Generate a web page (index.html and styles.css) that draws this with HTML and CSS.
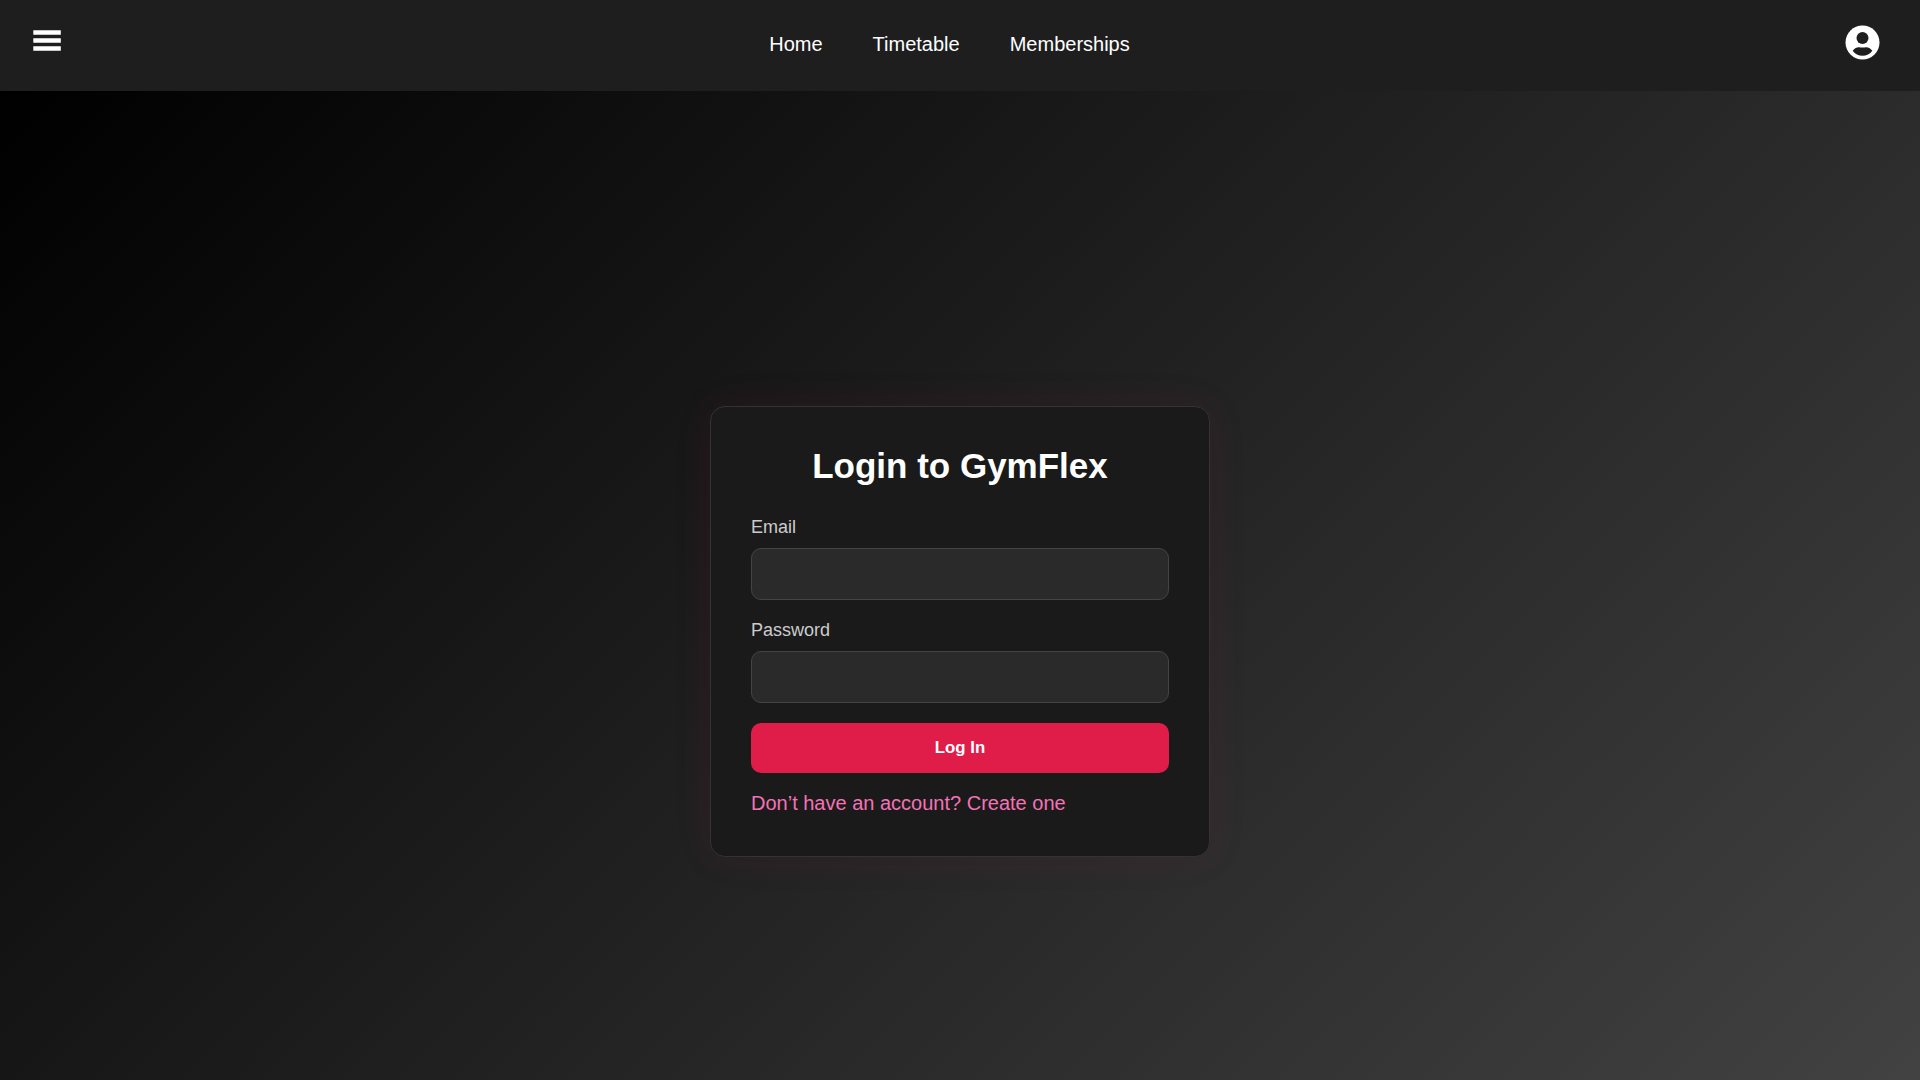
FILE: index.html
```html
<!DOCTYPE html>
<html lang="en">
<head>
<meta charset="utf-8">
<title>GymFlex</title>
<link rel="stylesheet" href="styles.css">
</head>
<body>
<header class="navbar">
  <button class="menu-btn" aria-label="Menu">
    <svg width="28" height="22" viewBox="0 0 28 22" fill="#fff"><path d="M.3 .3h27.500v4.400H.3zM.3 8.300h27.500v4.400H.3zM.3 16.300h27.500v4.400H.3z"/></svg>
  </button>
  <nav class="nav-links">
    <a href="#">Home</a>
    <a href="#">Timetable</a>
    <a href="#">Memberships</a>
  </nav>
  <a class="profile" href="#" aria-label="Account">
    <svg width="35" height="35" viewBox="0 0 35 35"><circle cx="17.500" cy="17.500" r="17" fill="#fff"/><circle cx="17.500" cy="13" r="6" fill="#1e1e1e"/><path d="M7.700 25.700C9.500 23.300 11.800 22.200 13.700 22.200C15 22.200 15.700 22.600 17.500 22.600S20 22.200 21.300 22.200C23.200 22.200 25.500 23.300 27.300 25.700C25 29 21.500 30.800 17.500 30.800S10 29 7.700 25.700Z" fill="#1e1e1e"/></svg>
  </a>
</header>
<main class="page">
  <form class="card">
    <h1>Login to GymFlex</h1>
    <label for="email">Email</label>
    <input id="email" type="email">
    <label for="password">Password</label>
    <input id="password" type="password">
    <button class="submit" type="button">Log In</button>
    <a class="signup" href="#">Don’t have an account? Create one</a>
  </form>
</main>
</body>
</html>
```
FILE: styles.css
```css
* { box-sizing: border-box; }
html { overflow: hidden; }
body { margin: 0; height: 100vh; overflow: hidden; font-family: "Liberation Sans", Arial, sans-serif; background: #1e1e1e; }
.navbar { height: 91px; display: flex; justify-content: space-between; align-items: flex-start; padding: 0 40px 0 33px; background: #1e1e1e; }
.menu-btn { display: flex; margin-top: 30px; padding: 0; border: 0; background: none; }
.nav-links { display: flex; gap: 50px; margin-top: 32px; margin-right: 7px; }
.nav-links a { font-size: 20px; line-height: 24px; color: #fff; text-decoration: none; }
.profile { display: flex; margin-top: 25px; }
.page { height: 100vh; display: flex; align-items: center; justify-content: center; background: linear-gradient(135deg, #000, #444); }
.card { width: 500px; height: 451px; padding: 40px; display: flex; flex-direction: column; background: #1a1a1a; border: 1px solid #333; border-radius: 15px; box-shadow: 0 0 40px rgba(225, 29, 72, .08); }
.card h1 { margin: 0 0 32px; font-size: 35px; line-height: 38px; text-align: center; color: #fff; }
.card label { margin-bottom: 10px; font-size: 18px; line-height: 21px; color: #ccc; }
.card input { height: 52px; margin: 0 0 20px; background: #2a2a2a; border: 1px solid #444; border-radius: 10px; }
.submit { height: 50px; margin: 0 0 19px; font: bold 16.8px "Liberation Sans", Arial, sans-serif; color: #fff; background: #e01c48; border: 0; border-radius: 10px; }
.signup { font-size: 20px; line-height: 23px; color: #f472b6; text-decoration: none; }
```
